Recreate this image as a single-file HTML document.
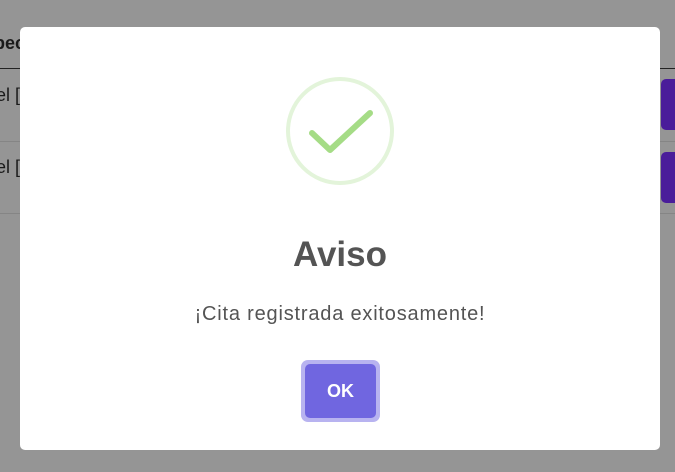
<!DOCTYPE html>
<html><head><style>
body{margin:0;width:675px;height:472px;background:#959595;position:relative;overflow:hidden;font-family:"Liberation Sans",sans-serif}
.t{position:absolute;color:#1a1a1a;font-size:18px}
.ln{position:absolute;left:0;width:675px;height:1px;background:#858585}
.pb{position:absolute;left:661px;width:30px;height:51px;background:#4a1d9a;border-radius:5px}
.m{position:absolute;left:20px;top:27px;width:640px;height:423px;background:#fff;border-radius:5px}
</style></head><body>
<div class="t" style="left:-6px;top:33px;font-weight:bold">pec</div>
<div class="ln" style="top:68px;background:#222"></div>
<div class="t" style="left:-4px;top:85px">el [</div>
<div class="ln" style="top:141px"></div>
<div class="t" style="left:-4px;top:157px">el [</div>
<div class="ln" style="top:213px"></div>
<div class="pb" style="top:79px"></div>
<div class="pb" style="top:152px"></div>
<div class="m">
<svg style="position:absolute;left:264px;top:48px" width="112" height="112" viewBox="0 0 112 112">
<circle cx="56" cy="56" r="52" fill="none" stroke="#e3f4da" stroke-width="4"/>
<path d="M28 58 L46 75 L86 38" fill="none" stroke="#a5dc86" stroke-width="6" stroke-linecap="round" stroke-linejoin="round"/>
</svg>
<div style="position:absolute;left:0;width:640px;top:208px;text-align:center;font-size:35px;font-weight:bold;color:#545454">Aviso</div>
<div style="position:absolute;left:0;width:640px;top:276px;text-align:center;font-size:20px;letter-spacing:0.8px;color:#545454">¡Cita registrada exitosamente!</div>
<div style="position:absolute;left:281px;top:333px;width:79px;height:62px;border-radius:7px;background:#b8b3f0"></div>
<div style="position:absolute;left:285px;top:337px;width:71px;height:54px;border-radius:5px;background:#7066e0;color:#fff;font-weight:bold;font-size:18px;line-height:54px;text-align:center">OK</div>
</div>
</body></html>
